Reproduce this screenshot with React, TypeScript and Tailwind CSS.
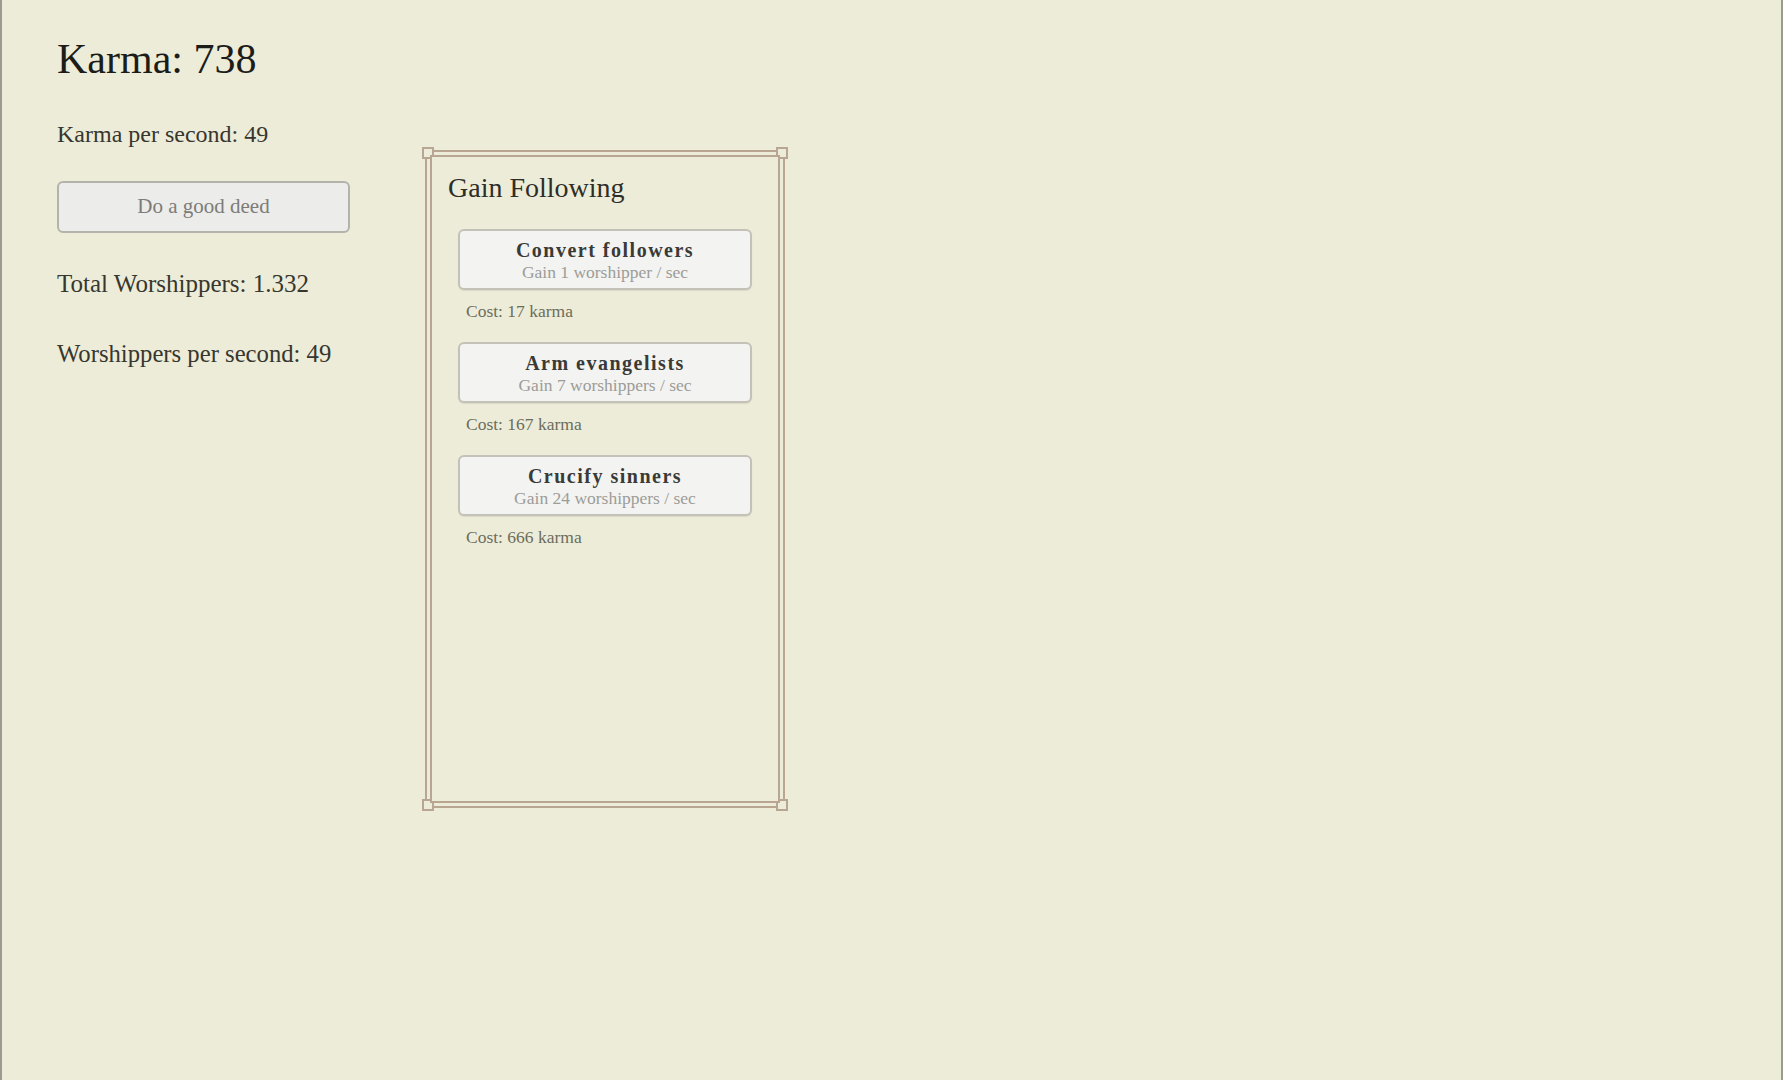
import React from "react";

const serif = { fontFamily: '"Liberation Serif", "Times New Roman", serif' };

type Upgrade = { name: string; gain: string; cost: number };

const upgrades: Upgrade[] = [
  { name: "Convert followers", gain: "Gain 1 worshipper / sec", cost: 17 },
  { name: "Arm evangelists", gain: "Gain 7 worshippers / sec", cost: 167 },
  { name: "Crucify sinners", gain: "Gain 24 worshippers / sec", cost: 666 },
];

function Corner({ pos }: { pos: string }) {
  return (
    <span
      className={`absolute ${pos} h-[12px] w-[12px] border-2 border-[#b8a592] bg-[#edecd8]`}
    />
  );
}

function UpgradeItem({ u }: { u: Upgrade }) {
  return (
    <div className="flex flex-col">
      <button className="flex h-[61px] w-full flex-col items-center justify-center rounded-[6px] border-2 border-[#c4c2b8] bg-[#f3f3f1] shadow-[0_1px_1px_rgba(0,0,0,0.08)]">
        <span className="text-[20px] font-bold leading-[24px] tracking-[1.5px] text-[#3a3a36]">
          {u.name}
        </span>
        <span className="text-[17.5px] leading-[20px] text-[#9c9c98]">{u.gain}</span>
      </button>
      <div className="mt-[11px] pl-[8px] text-[17.5px] leading-[20px] text-[#6c6c5c]">
        Cost: {u.cost} karma
      </div>
    </div>
  );
}

export default function App() {
  return (
    <div
      style={serif}
      className="flex h-[1080px] w-full border-x-2 border-[#9b9b90] bg-[#edecd8]"
    >
      {/* stats column */}
      <div className="ml-[55px] flex w-[310px] flex-col pt-[35px]">
        <h1 className="text-[42px] leading-[48px] text-[#1c1c18]">Karma: 738</h1>
        <p className="mt-[37px] text-[24px] leading-[28px] text-[#37372f]">
          Karma per second: 49
        </p>
        <button className="mt-[33px] flex h-[52px] w-[293px] items-center justify-center rounded-[6px] border-2 border-[#b3b3ab] bg-[#ececea] text-[21px] text-[#7c7c78]">
          Do a good deed
        </button>
        <p className="mt-[37px] text-[25px] leading-[28px] text-[#37372f]">
          Total Worshippers: 1.332
        </p>
        <p className="mt-[42px] text-[24.7px] leading-[28px] text-[#37372f]">
          Worshippers per second: 49
        </p>
      </div>

      {/* upgrades panel */}
      <div className="ml-[58px] mt-[150px]">
        <div className="relative h-[658px] w-[360px] border-2 border-[#b8a592] p-[3px]">
          <Corner pos="-left-[5px] -top-[5px]" />
          <Corner pos="-right-[5px] -top-[5px]" />
          <Corner pos="-left-[5px] -bottom-[5px]" />
          <Corner pos="-right-[5px] -bottom-[5px]" />
          <div className="relative h-full w-full border-2 border-[#b8a592] bg-[#edecd8]">
            <div className="flex flex-col px-[26px] pt-[15px]">
              <h2 className="-ml-[10px] text-[28px] leading-[32px] text-[#2e2e28]">
                Gain Following
              </h2>
              <div className="mt-[25px] flex flex-col gap-[21px]">
                {upgrades.map((u) => (
                  <UpgradeItem key={u.name} u={u} />
                ))}
              </div>
            </div>
          </div>
        </div>
      </div>
    </div>
  );
}
